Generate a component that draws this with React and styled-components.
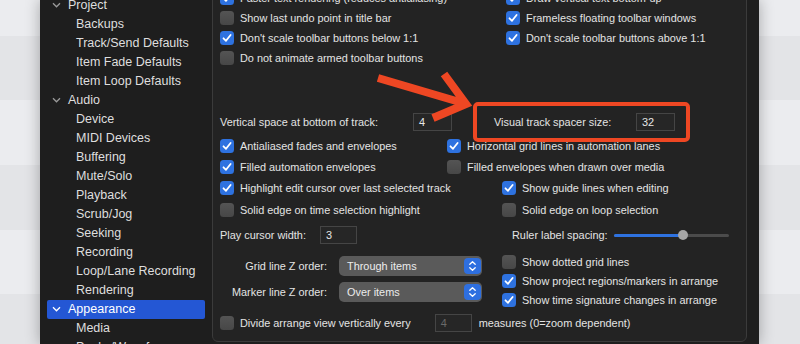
import React from "react";
import styled, { createGlobalStyle } from "styled-components";

const GlobalStyle = createGlobalStyle`
  html, body {
    margin: 0;
    padding: 0;
  }
  body {
    font-family: "Liberation Sans", Arial, sans-serif;
    background: #e7e8eb;
  }
`;

const Desk = styled.div`
  position: relative;
  width: 800px;
  height: 344px;
  overflow: hidden;
  display: flex;
  padding-left: 40px;
  box-sizing: border-box;
  background: linear-gradient(
    to bottom,
    #ebecef 0 36px,
    #e3e4e7 36px 100px,
    #ebecef 100px 165px,
    #e3e4e7 165px 230px,
    #ebecef 230px 294px,
    #e3e4e7 294px 344px
  );
`;

const Window = styled.div`
  width: 719px;
  height: 344px;
  display: flex;
  background: #1e1e1e;
  box-shadow: 0 0 14px rgba(0, 0, 0, 0.3);
`;

const Sidebar = styled.div`
  width: 172px;
  flex-shrink: 0;
  overflow: hidden;
`;

const TreeList = styled.div`
  margin-top: -4.5px;
  display: flex;
  flex-direction: column;
`;

const TreeRow = styled.div`
  height: 19px;
  margin: 0 7px;
  display: flex;
  align-items: center;
  padding-left: ${(p) => (p.$heading ? 5 : 29)}px;
  font-size: 12.5px;
  color: ${(p) => (p.$selected ? "#ffffff" : "#dedede")};
  background: ${(p) => (p.$selected ? "#2457d4" : "transparent")};
  border-radius: 2px;
  white-space: nowrap;
`;

const Chevron = styled.svg`
  width: 9px;
  height: 6px;
  margin-right: 7px;
  flex-shrink: 0;
`;

const Content = styled.div`
  flex: 1;
  display: flex;
  flex-direction: column;
  padding-right: 12px;
  overflow: hidden;
`;

const Panel = styled.div`
  flex: 1;
  margin-top: -20px;
  margin-bottom: 2px;
  padding: 7px 0 0 7px;
  border: 1px solid #3b3b3b;
  border-radius: 6px;
  background: #232323;
  color: #e4e4e4;
  font-size: 10.9px;
  white-space: nowrap;
`;

const TopGrid = styled.div`
  display: grid;
  grid-template-columns: 286px 1fr;
  grid-auto-rows: 20px;
  align-items: center;
`;

const Row = styled.div`
  display: flex;
  align-items: center;
  height: ${(p) => p.$h || 20}px;
  margin-top: ${(p) => p.$top || 0}px;
`;

const CheckItem = styled.div`
  display: flex;
  align-items: center;
  gap: 6px;
  width: ${(p) => (p.$w ? `${p.$w}px` : "auto")};
  height: ${(p) => p.$h || 20}px;
  flex-shrink: 0;
`;

const Box = styled.span`
  width: 14px;
  height: 14px;
  border-radius: 3.5px;
  flex-shrink: 0;
  display: flex;
  align-items: center;
  justify-content: center;
  background: ${(p) =>
    p.$on ? "#2e72e0" : "linear-gradient(#545454, #474747)"};
`;

const Label = styled.span`
  display: inline-block;
  width: ${(p) => (p.$w ? `${p.$w}px` : "auto")};
  text-align: ${(p) => (p.$right ? "right" : "left")};
  margin-left: ${(p) => p.$ml || 0}px;
  flex-shrink: 0;
`;

const Field = styled.div`
  width: ${(p) => p.$w}px;
  height: 18px;
  box-sizing: border-box;
  margin-left: ${(p) => p.$ml || 0}px;
  padding-left: 5px;
  display: flex;
  align-items: center;
  background: #262626;
  border: 1px solid #454545;
  color: ${(p) => (p.$disabled ? "#6a6a6a" : "#e8e8e8")};
  flex-shrink: 0;
`;

const RedBox = styled.div`
  width: 217px;
  height: 40px;
  margin-left: 21px;
  box-sizing: border-box;
  padding: 0 11px 0 17px;
  display: flex;
  align-items: center;
  justify-content: space-between;
  border: 4px solid #ee4723;
  border-radius: 5px;
  flex-shrink: 0;
`;

const Track = styled.div`
  position: relative;
  width: 115px;
  height: 3px;
  margin-left: 6px;
  border-radius: 2px;
  background: #4b4b4b;
`;

const Fill = styled.div`
  height: 100%;
  border-radius: 2px;
  background: #2e72e0;
`;

const Knob = styled.div`
  position: absolute;
  top: 50%;
  width: 10px;
  height: 10px;
  margin: -5px 0 0 -5px;
  border-radius: 50%;
  background: #a6a6a6;
`;

const Lower = styled.div`
  display: flex;
  margin-top: 7px;
`;

const LeftCol = styled.div`
  width: 282px;
  padding-top: 4px;
  display: flex;
  flex-direction: column;
  gap: 6px;
`;

const RightCol = styled.div`
  display: flex;
  flex-direction: column;
`;

const ZRow = styled.div`
  display: flex;
  align-items: center;
  gap: 12px;
  height: 20px;
`;

const Select = styled.div`
  width: 143px;
  height: 20px;
  box-sizing: border-box;
  padding: 0 1px 0 8px;
  display: flex;
  align-items: center;
  justify-content: space-between;
  border-radius: 5px;
  background: #5a5a5a;
  color: #ececec;
`;

const Stepper = styled.span`
  width: 17px;
  height: 16px;
  border-radius: 4px;
  background: #2e6fe0;
  display: flex;
  align-items: center;
  justify-content: center;
`;

const ArrowMark = styled.svg`
  position: absolute;
  left: 370px;
  top: 62px;
  width: 105px;
  height: 62px;
  pointer-events: none;
`;

const Check = ({ on, label, w, h }) => (
  <CheckItem $w={w} $h={h}>
    <Box $on={on}>
      {on && (
        <svg width="10" height="10" viewBox="0 0 10 10">
          <path
            d="M1.5 5.3 L4 7.8 L8.6 2"
            fill="none"
            stroke="#fff"
            strokeWidth="1.8"
            strokeLinecap="round"
            strokeLinejoin="round"
          />
        </svg>
      )}
    </Box>
    <span>{label}</span>
  </CheckItem>
);

const Dropdown = ({ value }) => (
  <Select>
    <span>{value}</span>
    <Stepper>
      <svg width="9" height="12" viewBox="0 0 9 12">
        <path
          d="M1.8 4.3 L4.5 1.8 L7.2 4.3 M1.8 7.7 L4.5 10.2 L7.2 7.7"
          fill="none"
          stroke="#fff"
          strokeWidth="1.3"
          strokeLinecap="round"
          strokeLinejoin="round"
        />
      </svg>
    </Stepper>
  </Select>
);

const tree = [
  { name: "Project", heading: true },
  { name: "Backups" },
  { name: "Track/Send Defaults" },
  { name: "Item Fade Defaults" },
  { name: "Item Loop Defaults" },
  { name: "Audio", heading: true },
  { name: "Device" },
  { name: "MIDI Devices" },
  { name: "Buffering" },
  { name: "Mute/Solo" },
  { name: "Playback" },
  { name: "Scrub/Jog" },
  { name: "Seeking" },
  { name: "Recording" },
  { name: "Loop/Lane Recording" },
  { name: "Rendering" },
  { name: "Appearance", heading: true, selected: true },
  { name: "Media" },
  { name: "Peaks/Waveforms" },
];

const App = () => {
  const ruler = 60;

  return (
    <>
      <GlobalStyle />
      <Desk>
        <Window>
          <Sidebar>
            <TreeList>
              {tree.map((item) => (
                <TreeRow
                  key={item.name}
                  $heading={item.heading}
                  $selected={item.selected}
                >
                  {item.heading && (
                    <Chevron viewBox="0 0 9 6">
                      <path
                        d="M1 1.2 L4.5 4.8 L8 1.2"
                        fill="none"
                        stroke={item.selected ? "#fff" : "#9a9a9a"}
                        strokeWidth="1.3"
                      />
                    </Chevron>
                  )}
                  {item.name}
                </TreeRow>
              ))}
            </TreeList>
          </Sidebar>

          <Content>
            <Panel>
              <TopGrid>
                <Check on label="Faster text rendering (reduces antialiasing)" />
                <Check on label="Draw vertical text bottom-up" />
                <Check label="Show last undo point in title bar" />
                <Check on label="Frameless floating toolbar windows" />
                <Check on label="Don't scale toolbar buttons below 1:1" />
                <Check on label="Don't scale toolbar buttons above 1:1" />
                <Check label="Do not animate armed toolbar buttons" />
              </TopGrid>

              <Row $top={44}>
                <Label $w={193}>Vertical space at bottom of track:</Label>
                <Field $w={39}>4</Field>
                <RedBox>
                  <span>Visual track spacer size:</span>
                  <Field $w={39}>32</Field>
                </RedBox>
              </Row>

              <Row $top={4}>
                <Check on w={227} label="Antialiased fades and envelopes" />
                <Check on label="Horizontal grid lines in automation lanes" />
              </Row>
              <Row $top={1}>
                <Check on w={227} label="Filled automation envelopes" />
                <Check label="Filled envelopes when drawn over media" />
              </Row>
              <Row $top={1}>
                <Check
                  on
                  w={282}
                  label="Highlight edit cursor over last selected track"
                />
                <Check on label="Show guide lines when editing" />
              </Row>
              <Row $top={2}>
                <Check w={282} label="Solid edge on time selection highlight" />
                <Check label="Solid edge on loop selection" />
              </Row>

              <Row $top={5}>
                <Label $w={100}>Play cursor width:</Label>
                <Field $w={37}>3</Field>
                <Label $ml={155}>Ruler label spacing:</Label>
                <Track>
                  <Fill style={{ width: `${ruler}%` }} />
                  <Knob style={{ left: `${ruler}%` }} />
                </Track>
              </Row>

              <Lower>
                <LeftCol>
                  <ZRow>
                    <Label $w={107} $right>
                      Grid line Z order:
                    </Label>
                    <Dropdown value="Through items" />
                  </ZRow>
                  <ZRow>
                    <Label $w={107} $right>
                      Marker line Z order:
                    </Label>
                    <Dropdown value="Over items" />
                  </ZRow>
                </LeftCol>
                <RightCol>
                  <Check h={19} label="Show dotted grid lines" />
                  <Check h={19} on label="Show project regions/markers in arrange" />
                  <Check h={19} on label="Show time signature changes in arrange" />
                </RightCol>
              </Lower>

              <Row $top={4}>
                <Check label="Divide arrange view vertically every" />
                <Field $w={37} $ml={24} $disabled>
                  4
                </Field>
                <Label $ml={7}>measures (0=zoom dependent)</Label>
              </Row>
            </Panel>
          </Content>
        </Window>

        <ArrowMark viewBox="0 0 105 62">
          <path
            d="M8 16 L93 41 M74 12 L96 42 L63 56"
            fill="none"
            stroke="#ee4723"
            strokeWidth="8"
            strokeLinejoin="miter"
          />
        </ArrowMark>
      </Desk>
    </>
  );
};

export default App;
